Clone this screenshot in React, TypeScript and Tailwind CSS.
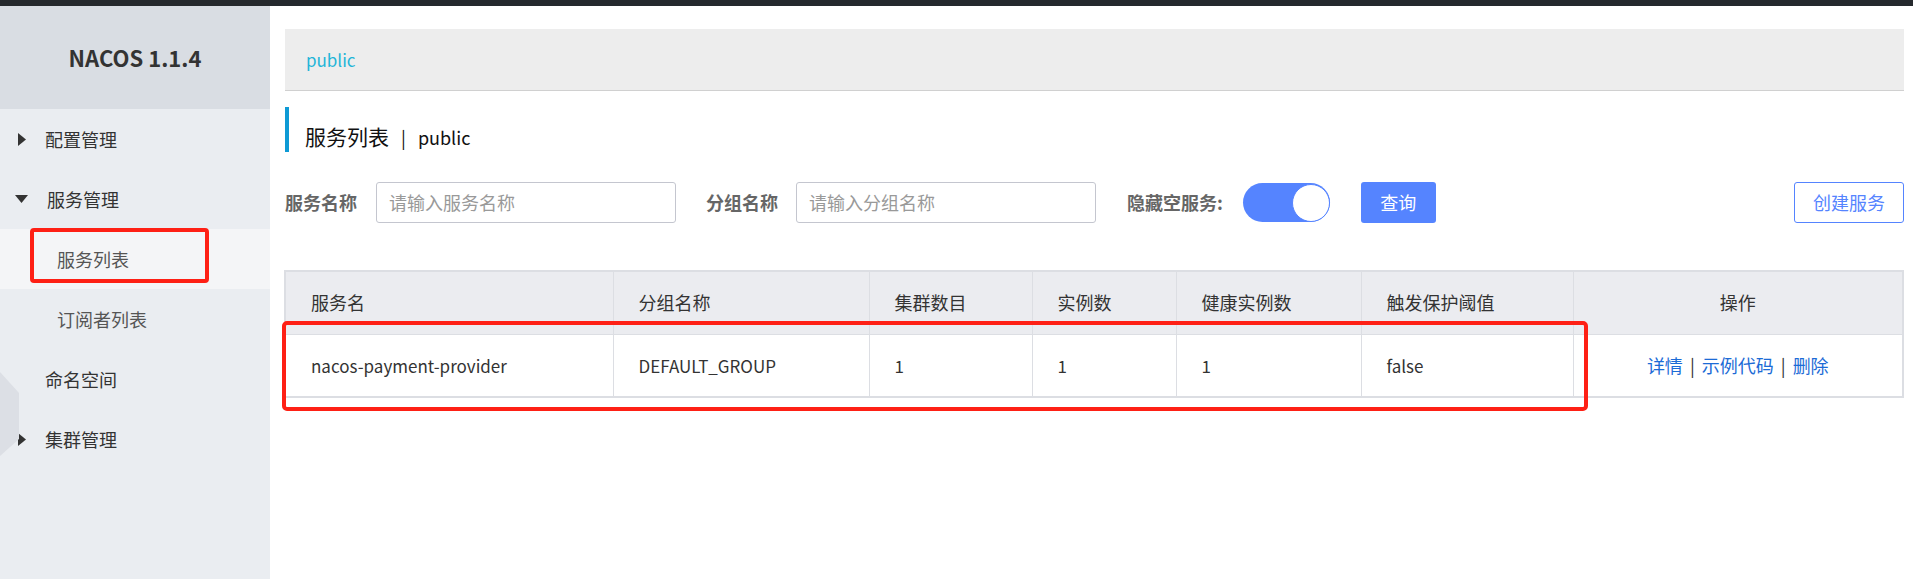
const font = { fontFamily: '"Noto Sans CJK SC", "Liberation Sans", sans-serif' };

const Tri = ({ down }: { down?: boolean }) =>
  down ? (
    <svg width="13" height="9" viewBox="0 0 13 9" className="mr-[19px] ml-[15px]">
      <path d="M0 0h13L6.5 8z" fill="#333" />
    </svg>
  ) : (
    <svg width="8" height="13" viewBox="0 0 8 13" className="mr-[19px] ml-[18px]">
      <path d="M0 0l8 6.5L0 13z" fill="#333" />
    </svg>
  );

const cols = [
  { title: "服务名", w: 328, v: "nacos-payment-provider" },
  { title: "分组名称", w: 256, v: "DEFAULT_GROUP" },
  { title: "集群数目", w: 163, v: "1" },
  { title: "实例数", w: 144, v: "1" },
  { title: "健康实例数", w: 185, v: "1" },
  { title: "触发保护阈值", w: 212, v: "false" },
];

export default function App() {
  return (
    <div className="flex h-screen flex-col overflow-hidden bg-white" style={font}>
      <div className="h-[6px] shrink-0 bg-[#25292d]" />
      <div className="flex flex-1">
        <aside className="relative w-[270px] shrink-0 bg-[#eaedf1] text-[18px] text-[#333]">
          <div className="flex h-[103px] items-center justify-center bg-[#d9dde3] text-[22px] font-bold text-[#333]">
            NACOS 1.1.4
          </div>
          <div className="flex h-[60px] items-center">
            <Tri />
            配置管理
          </div>
          <div className="flex h-[60px] items-center">
            <Tri down />
            服务管理
          </div>
          <div className="relative flex h-[60px] items-center bg-[#f4f5f7] pl-[57px] text-[#555]">
            服务列表
            <div className="absolute left-[30px] top-[-1px] h-[55px] w-[179px] rounded-[4px] border-[4px] border-[#fe2015]" />
          </div>
          <div className="flex h-[60px] items-center pl-[57px] text-[#555]">订阅者列表</div>
          <div className="flex h-[60px] items-center pl-[45px]">命名空间</div>
          <div className="flex h-[60px] items-center">
            <Tri />
            集群管理
          </div>
          <svg width="20" height="84" viewBox="0 0 20 84" className="absolute left-0 top-[366px]">
            <path d="M0 0L19 21V67L0 84z" fill="#dcdfe5" />
          </svg>
        </aside>

        <main className="flex-1 pl-[14px] pr-[9px] pt-[23px]">
          <div className="ml-[1px] flex h-[62px] items-center border-b border-[#d0d0d0] bg-[#ededed] pl-[21px] text-[17px] text-[#1fb5d8]">
            public
          </div>

          <div className="ml-[1px] mt-[16px] flex h-[45px] items-center border-l-[4px] border-[#0e9ad5] pl-[16px] pt-[15px] text-[21px] text-[#111]">
            <span>服务列表</span>
            <span className="mx-[12px] text-[18px]">|</span>
            <span className="text-[18px]">public</span>
          </div>

          <div className="ml-[1px] mt-[30px] flex h-[41px] items-center text-[18px]">
            <span className="font-bold text-[#666]">服务名称</span>
            <div className="ml-[19px] flex h-[41px] w-[300px] items-center rounded-[3px] border border-[#c4c6cf] pl-[12px] text-[#999]">
              请输入服务名称
            </div>
            <span className="ml-[30px] font-bold text-[#666]">分组名称</span>
            <div className="ml-[18px] flex h-[41px] w-[300px] items-center rounded-[3px] border border-[#c4c6cf] pl-[12px] text-[#999]">
              请输入分组名称
            </div>
            <span className="ml-[31px] font-bold text-[#666]">隐藏空服务:</span>
            <div className="ml-[20px] flex h-[39px] w-[87px] items-center justify-end rounded-full bg-[#5584ff]">
              <div className="h-[38px] w-[38px] rounded-full border border-[#5584ff] bg-white" />
            </div>
            <div className="ml-[31px] flex h-[41px] w-[75px] items-center justify-center rounded-[3px] bg-[#5584ff] text-white">
              查询
            </div>
            <div className="ml-auto flex h-[41px] w-[110px] items-center justify-center rounded-[3px] border border-[#5584ff] text-[#5584ff]">
              创建服务
            </div>
          </div>

          <div className="relative mt-[47px]">
            <table className="w-full table-fixed border-collapse border-2 border-[#dcdee3] text-[18px] text-[#333]">
              <colgroup>
                {cols.map((c) => (
                  <col key={c.title} style={{ width: c.w }} />
                ))}
                <col />
              </colgroup>
              <thead>
                <tr className="h-[63px] bg-[#ebecf0]">
                  {cols.map((c) => (
                    <th key={c.title} className="border border-[#dcdee3] pl-[25px] text-left font-normal">
                      {c.title}
                    </th>
                  ))}
                  <th className="border border-[#dcdee3] font-normal">操作</th>
                </tr>
              </thead>
              <tbody>
                <tr className="h-[63px]">
                  {cols.map((c) => (
                    <td key={c.title} className="border border-[#dcdee3] pl-[25px] text-[17px]">
                      {c.v}
                    </td>
                  ))}
                  <td className="border border-[#dcdee3] text-center text-[#1c6bd6]">
                    详情<span className="mx-[7px] text-[#333]">|</span>示例代码
                    <span className="mx-[7px] text-[#333]">|</span>删除
                  </td>
                </tr>
              </tbody>
            </table>
            <div className="absolute left-[-2px] top-[51px] h-[90px] w-[1306px] rounded-[5px] border-[4px] border-[#fe2015]" />
          </div>
        </main>
      </div>
    </div>
  );
}
